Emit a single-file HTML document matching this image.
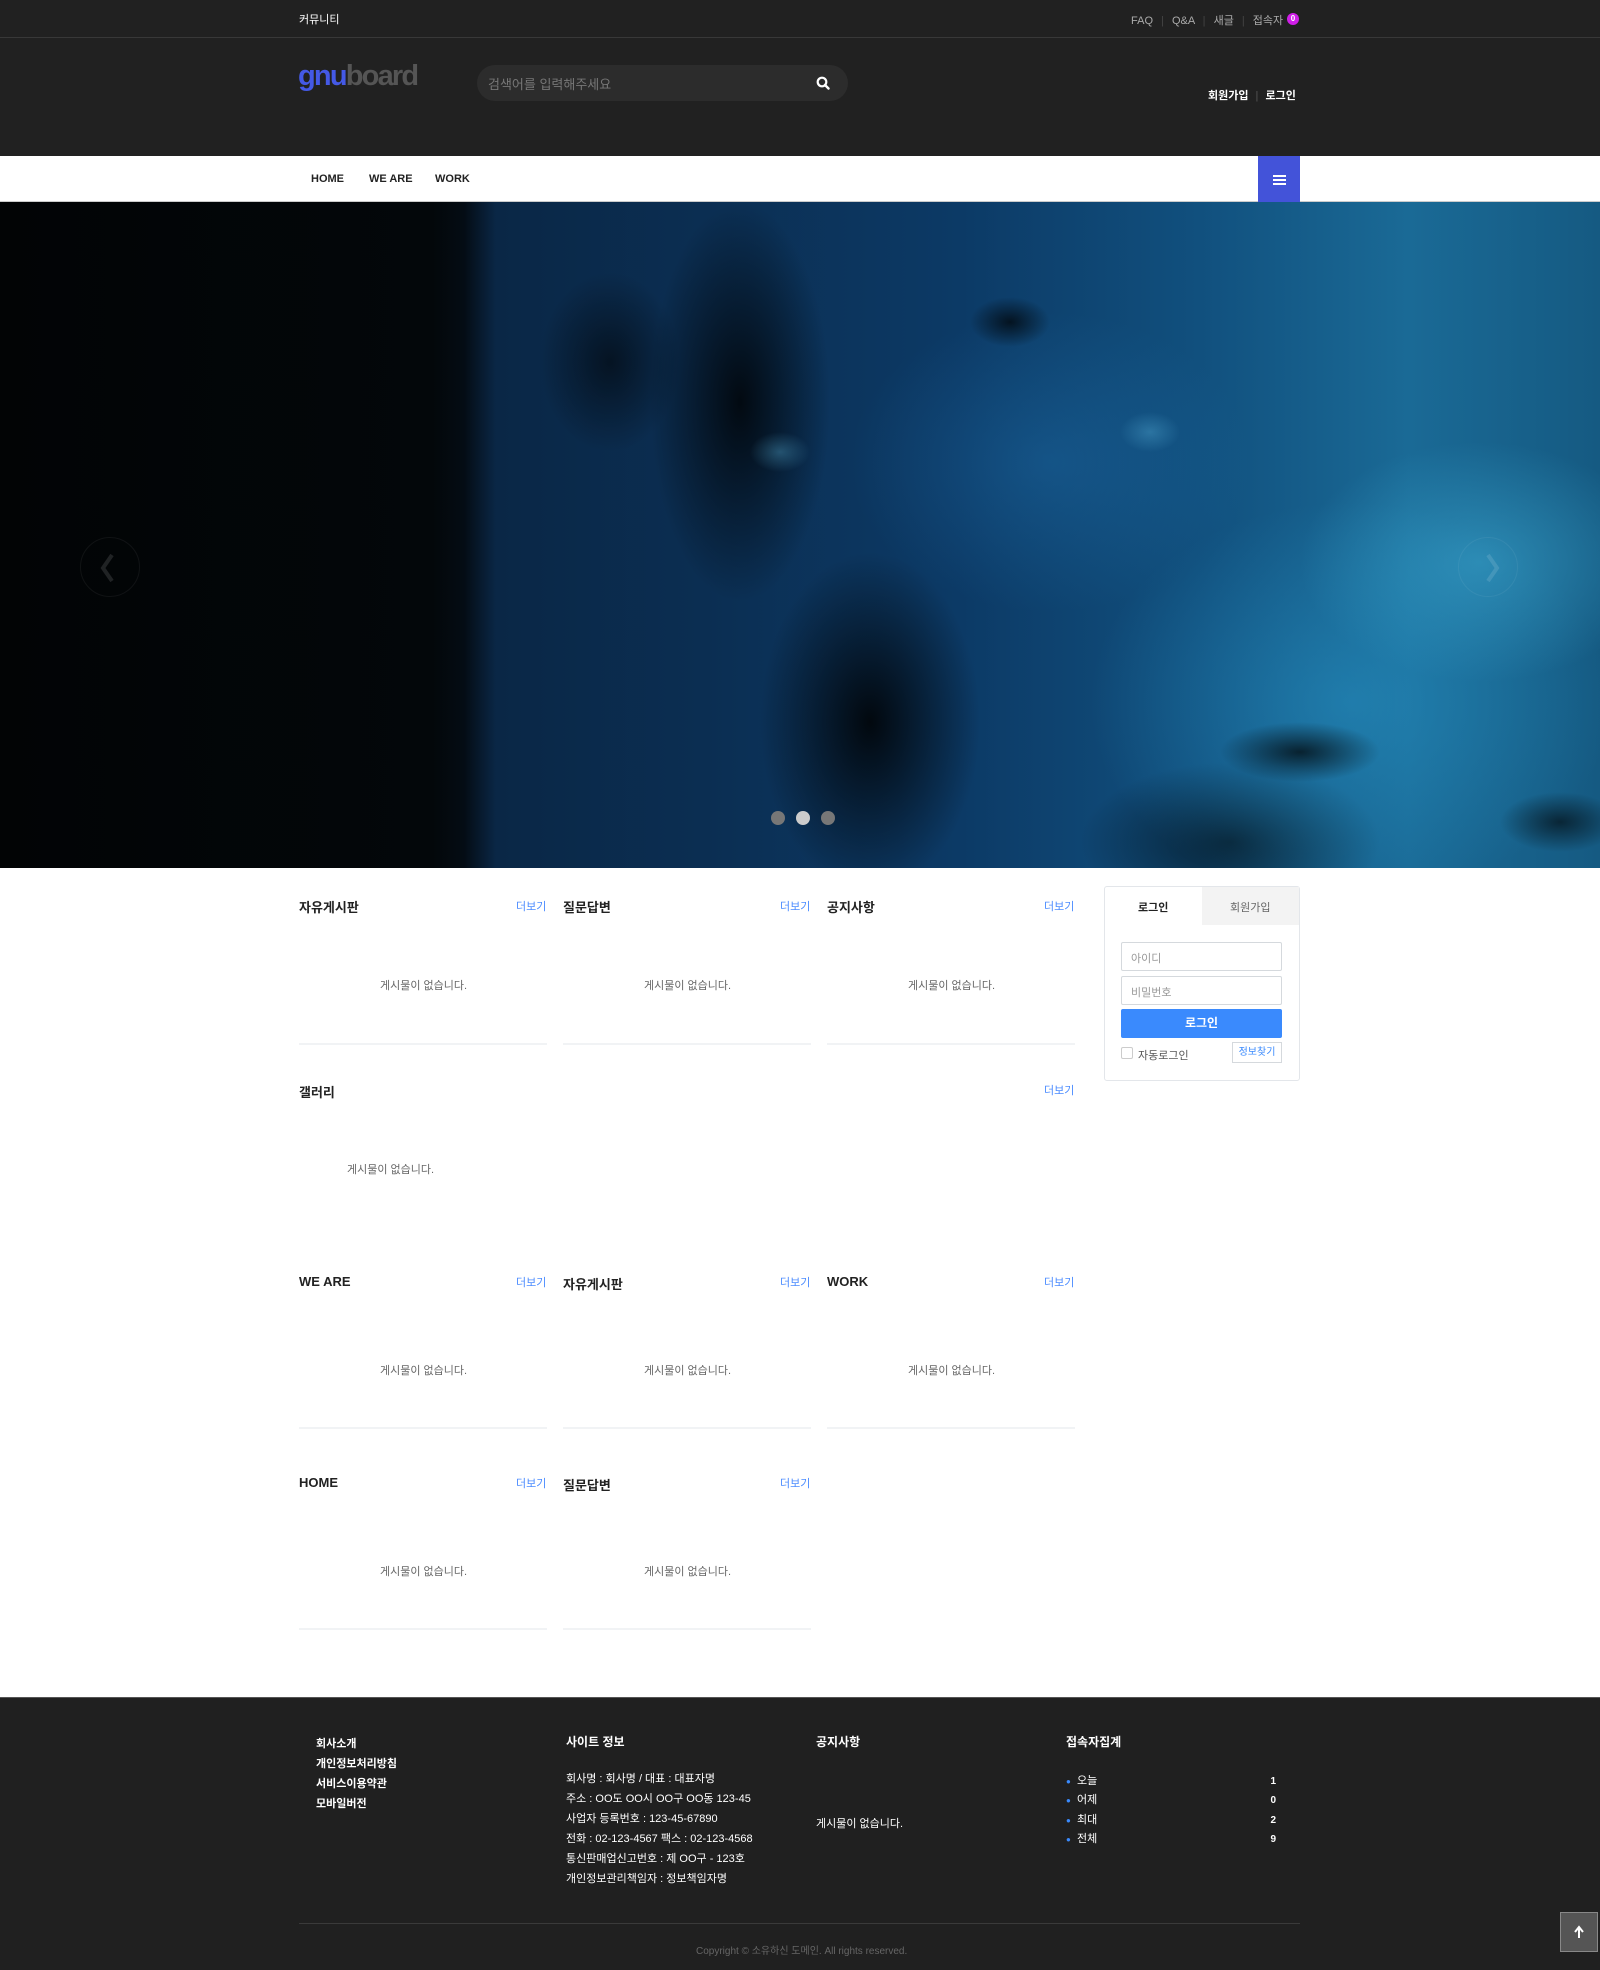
<!DOCTYPE html>
<html lang="ko"><head><meta charset="utf-8">
<style>
*{margin:0;padding:0;box-sizing:border-box}
body{width:1600px;height:1970px;position:relative;background:#fff;font-family:"Liberation Sans","Noto Sans CJK KR",sans-serif;overflow:hidden}
.a{position:absolute}
#top{left:0;top:0;width:1600px;height:38px;background:#212121;border-bottom:1px solid #383838}
#hd{left:0;top:38px;width:1600px;height:118px;background:#212121}
#nav{left:0;top:156px;width:1600px;height:46px;background:#fff;border-bottom:1px solid #ccc}
#hero{left:0;top:202px;width:1600px;height:666px;overflow:hidden;
background:
radial-gradient(ellipse 40px 25px at 1010px 120px,rgba(0,0,0,.7),transparent),
radial-gradient(ellipse 60px 30px at 1560px 620px,rgba(0,0,0,.6),transparent),
radial-gradient(ellipse 80px 30px at 1300px 550px,rgba(0,0,0,.7),transparent),
radial-gradient(ellipse 30px 20px at 780px 250px,rgba(90,180,220,.35),transparent),
radial-gradient(ellipse 30px 20px at 1150px 230px,rgba(90,180,220,.35),transparent),
radial-gradient(ellipse 180px 120px at 1480px 360px,rgba(60,170,210,.55),transparent),
radial-gradient(ellipse 260px 200px at 1350px 500px,rgba(40,150,200,.5),transparent),
radial-gradient(ellipse 200px 150px at 1050px 260px,rgba(30,110,170,.4),transparent),
radial-gradient(ellipse 110px 170px at 870px 520px,rgba(0,0,0,.85),transparent),
radial-gradient(ellipse 90px 200px at 740px 200px,rgba(0,0,0,.8),transparent),
radial-gradient(ellipse 70px 90px at 610px 160px,rgba(0,0,0,.55),transparent),
radial-gradient(ellipse 150px 80px at 1230px 640px,rgba(0,0,0,.6),transparent),
linear-gradient(90deg,#020405 0%,#03070a 27%,#040c14 29%,#0a2746 31%,#0b2e52 44%,#0c3a66 60%,#11507e 75%,#1a6a96 88%,#155a82 100%)}
.t{font-size:13px;color:#222;font-weight:bold}
.m{font-size:11px;color:#4c8cff}
.e{font-size:11px;color:#666}
.ln{height:2px;background:#f1f3f5}
.f{color:#fff;font-size:11px}
</style></head><body>
<div id="top" class="a"></div>
<div class="a" style="left:299px;top:11px;font-size:11px;color:#fff">커뮤니티</div>
<div class="a" style="left:1131px;top:12px;font-size:11px;color:#aaa;white-space:nowrap">FAQ <span style="color:#444;margin:0 5px">|</span> Q&amp;A <span style="color:#444;margin:0 5px">|</span> 새글 <span style="color:#444;margin:0 5px">|</span> 접속자</div>
<div class="a" style="left:1287px;top:13px;width:12px;height:12px;border-radius:6px;background:#d01ee8;color:#fff;font-size:8px;text-align:center;line-height:12px;font-weight:bold">0</div>
<div id="hd" class="a"></div>
<div class="a" style="left:298px;top:60px;font-size:29px;font-weight:bold;letter-spacing:-1.8px;color:#555"><span style="color:#4459e6">gnu</span>board</div>
<div class="a" style="left:477px;top:65px;width:371px;height:36px;border-radius:18px;background:#2c2c2c"></div>
<div class="a" style="left:488px;top:74px;font-size:13px;color:#777">검색어를 입력해주세요</div>
<svg class="a" style="left:816px;top:76px" width="14" height="14" viewBox="0 0 14 14"><circle cx="6" cy="6" r="4.3" fill="none" stroke="#fff" stroke-width="2.2"/><path d="M9 9l3.5 3.5" stroke="#fff" stroke-width="2.4" stroke-linecap="round"/></svg>
<div class="a" style="left:1208px;top:87px;font-size:11px;color:#fff;font-weight:bold;white-space:nowrap">회원가입 <span style="color:#555;font-weight:normal;margin:0 4px">|</span> 로그인</div>
<div id="nav" class="a"></div>
<div class="a" style="left:311px;top:173px;font-size:11px;color:#222;font-weight:bold">HOME</div>
<div class="a" style="left:369px;top:173px;font-size:11px;color:#222;font-weight:bold">WE ARE</div>
<div class="a" style="left:435px;top:173px;font-size:11px;color:#222;font-weight:bold">WORK</div>
<div class="a" style="left:1258px;top:156px;width:42px;height:46px;background:#4353d9"></div>
<div class="a" style="left:1273px;top:175px;width:13px;height:2px;background:#fff;box-shadow:0 4px #fff,0 8px #fff"></div>
<div id="hero" class="a"></div>
<div class="a" style="left:80px;top:537px;width:60px;height:60px;border-radius:30px;border:1px solid rgba(255,255,255,.06)"></div>
<svg class="a" style="left:96px;top:552px" width="24" height="32"><path d="M16 3L7 16l9 13" fill="none" stroke="rgba(255,255,255,.12)" stroke-width="4"/></svg>
<div class="a" style="left:1458px;top:537px;width:60px;height:60px;border-radius:30px;border:1px solid rgba(255,255,255,.06)"></div>
<svg class="a" style="left:1480px;top:552px" width="24" height="32"><path d="M8 3l9 13-9 13" fill="none" stroke="rgba(255,255,255,.12)" stroke-width="4"/></svg>
<div class="a" style="left:771px;top:811px;width:14px;height:14px;border-radius:7px;background:#777"></div>
<div class="a" style="left:796px;top:811px;width:14px;height:14px;border-radius:7px;background:#ccc"></div>
<div class="a" style="left:821px;top:811px;width:14px;height:14px;border-radius:7px;background:#777"></div>

<div class="a t" style="left:299px;top:897px">자유게시판</div><div class="a m" style="left:516px;top:898px">더보기</div><div class="a e" style="left:380px;top:977px">게시물이 없습니다.</div><div class="a ln" style="left:299px;top:1043px;width:248px"></div>
<div class="a t" style="left:563px;top:897px">질문답변</div><div class="a m" style="left:780px;top:898px">더보기</div><div class="a e" style="left:644px;top:977px">게시물이 없습니다.</div><div class="a ln" style="left:563px;top:1043px;width:248px"></div>
<div class="a t" style="left:827px;top:897px">공지사항</div><div class="a m" style="left:1044px;top:898px">더보기</div><div class="a e" style="left:908px;top:977px">게시물이 없습니다.</div><div class="a ln" style="left:827px;top:1043px;width:248px"></div>
<div class="a t" style="left:299px;top:1082px">갤러리</div><div class="a m" style="left:1044px;top:1082px">더보기</div><div class="a e" style="left:347px;top:1161px">게시물이 없습니다.</div>
<div class="a t" style="left:299px;top:1274px">WE ARE</div><div class="a m" style="left:516px;top:1274px">더보기</div><div class="a e" style="left:380px;top:1362px">게시물이 없습니다.</div><div class="a ln" style="left:299px;top:1427px;width:248px"></div>
<div class="a t" style="left:563px;top:1274px">자유게시판</div><div class="a m" style="left:780px;top:1274px">더보기</div><div class="a e" style="left:644px;top:1362px">게시물이 없습니다.</div><div class="a ln" style="left:563px;top:1427px;width:248px"></div>
<div class="a t" style="left:827px;top:1274px">WORK</div><div class="a m" style="left:1044px;top:1274px">더보기</div><div class="a e" style="left:908px;top:1362px">게시물이 없습니다.</div><div class="a ln" style="left:827px;top:1427px;width:248px"></div>
<div class="a t" style="left:299px;top:1475px">HOME</div><div class="a m" style="left:516px;top:1475px">더보기</div><div class="a e" style="left:380px;top:1563px">게시물이 없습니다.</div><div class="a ln" style="left:299px;top:1628px;width:248px"></div>
<div class="a t" style="left:563px;top:1475px">질문답변</div><div class="a m" style="left:780px;top:1475px">더보기</div><div class="a e" style="left:644px;top:1563px">게시물이 없습니다.</div><div class="a ln" style="left:563px;top:1628px;width:248px"></div>

<div class="a" style="left:1104px;top:886px;width:196px;height:195px;border:1px solid #e3e6ea;border-radius:3px;background:#fff"></div>
<div class="a" style="left:1202px;top:887px;width:97px;height:38px;background:#f3f3f3"></div>
<div class="a" style="left:1138px;top:899px;font-size:11px;font-weight:bold;color:#222">로그인</div>
<div class="a" style="left:1230px;top:899px;font-size:11px;color:#666">회원가입</div>
<div class="a" style="left:1121px;top:942px;width:161px;height:29px;border:1px solid #d5d9dd;border-radius:2px"></div>
<div class="a" style="left:1131px;top:950px;font-size:11px;color:#999">아이디</div>
<div class="a" style="left:1121px;top:976px;width:161px;height:29px;border:1px solid #d5d9dd;border-radius:2px"></div>
<div class="a" style="left:1131px;top:984px;font-size:11px;color:#999">비밀번호</div>
<div class="a" style="left:1121px;top:1009px;width:161px;height:29px;background:#3a8afd;border-radius:2px;color:#fff;font-size:12px;font-weight:bold;text-align:center;line-height:29px">로그인</div>
<div class="a" style="left:1121px;top:1047px;width:12px;height:12px;border:1px solid #ccc;border-radius:2px"></div>
<div class="a" style="left:1138px;top:1047px;font-size:11px;color:#555">자동로그인</div>
<div class="a" style="left:1232px;top:1042px;width:50px;height:21px;border:1px solid #d5d9dd;color:#3a8afd;font-size:10px;text-align:center;line-height:19px">정보찾기</div>

<div class="a" style="left:0;top:1697px;width:1600px;height:273px;background:#202020;border-top:1px solid #555"></div>
<div class="a f" style="left:316px;top:1734px;font-weight:bold;line-height:20px">회사소개<br>개인정보처리방침<br>서비스이용약관<br>모바일버전</div>
<div class="a f" style="left:566px;top:1733px;font-size:12px;font-weight:bold">사이트 정보</div>
<div class="a f" style="left:566px;top:1769px;line-height:20px">회사명 : 회사명 / 대표 : 대표자명<br>주소 : OO도 OO시 OO구 OO동 123-45<br>사업자 등록번호 : 123-45-67890<br>전화 : 02-123-4567 팩스 : 02-123-4568<br>통신판매업신고번호 : 제 OO구 - 123호<br>개인정보관리책임자 : 정보책임자명</div>
<div class="a f" style="left:816px;top:1733px;font-size:12px;font-weight:bold">공지사항</div>
<div class="a f" style="left:816px;top:1815px">게시물이 없습니다.</div>
<div class="a f" style="left:1066px;top:1733px;font-size:12px;font-weight:bold">접속자집계</div>
<div class="a f" style="left:1066px;top:1772px;line-height:19.3px"><span style="color:#3a8afd;font-size:8px">●</span>&nbsp; 오늘<br><span style="color:#3a8afd;font-size:8px">●</span>&nbsp; 어제<br><span style="color:#3a8afd;font-size:8px">●</span>&nbsp; 최대<br><span style="color:#3a8afd;font-size:8px">●</span>&nbsp; 전체</div>
<div class="a f" style="left:1268px;top:1772px;line-height:19.3px;font-weight:bold;font-size:10px;text-align:right;width:8px">1<br>0<br>2<br>9</div>
<div class="a" style="left:299px;top:1923px;width:1001px;height:1px;background:#3a3a3a"></div>
<div class="a" style="left:696px;top:1942px;font-size:10px;color:#666">Copyright © 소유하신 도메인. All rights reserved.</div>
<div class="a" style="left:1560px;top:1912px;width:38px;height:40px;background:#555;border:1px solid #888"></div>
<svg class="a" style="left:1573px;top:1925px" width="12" height="14"><path d="M6 13V3M2 7l4-5 4 5" fill="none" stroke="#fff" stroke-width="2"/></svg>
</body></html>
